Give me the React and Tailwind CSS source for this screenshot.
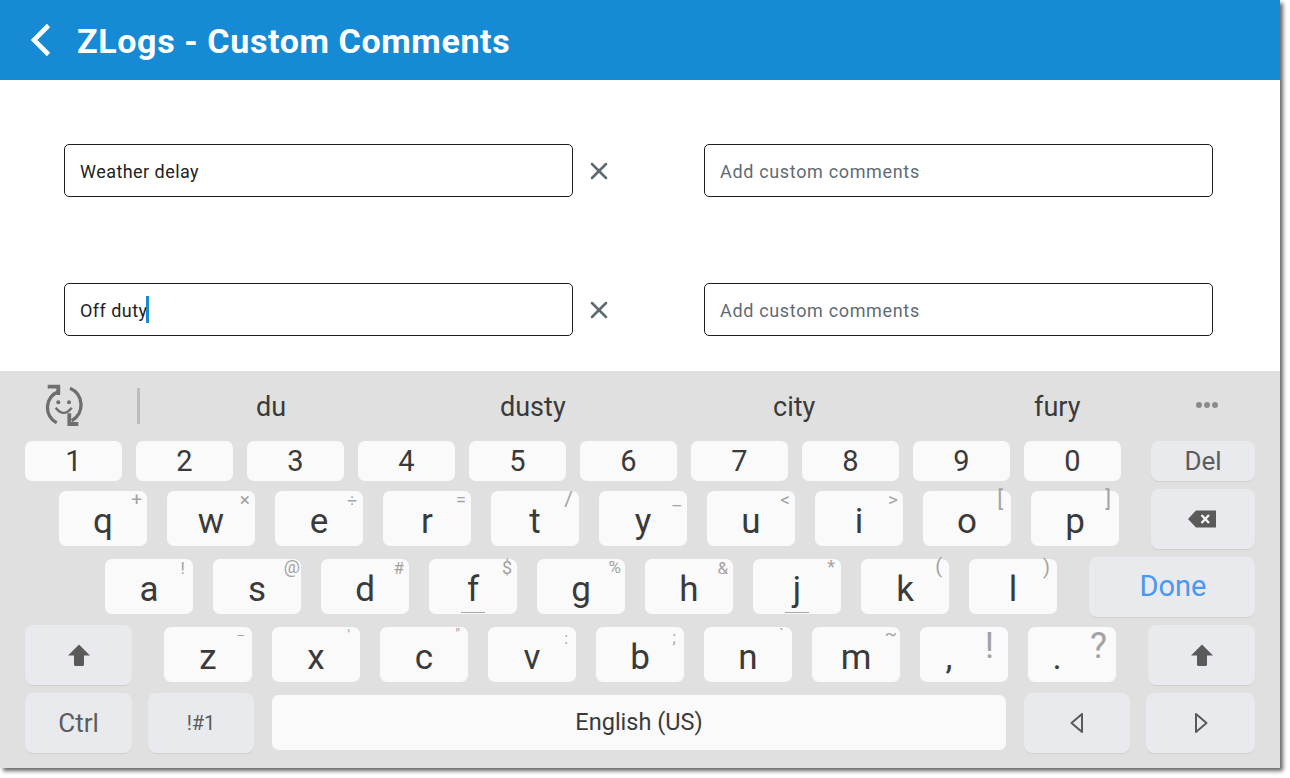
import { X } from 'lucide-react';

const font = "font-['Roboto','Liberation_Sans',sans-serif]";

const numberKeys = ['1', '2', '3', '4', '5', '6', '7', '8', '9', '0'];

const topRow = [
  { k: 'q', hint: '+', hintClass: 'right-[5px] top-[-1px] text-[19px]' },
  { k: 'w', hint: '×', hintClass: 'right-[5px] top-[-1px] text-[19px]' },
  { k: 'e', hint: '÷', hintClass: 'right-[6px] top-[-1px] text-[17px]' },
  { k: 'r', hint: '=', hintClass: 'right-[5px] top-[-1px] text-[18px]' },
  { k: 't', hint: '/', hintClass: 'right-[6px] top-[-2px] text-[21px]' },
  { k: 'y', hint: '_', hintClass: 'right-[6px] top-[-2px] text-[19px]' },
  { k: 'u', hint: '<', hintClass: 'right-[5px] top-[-1px] text-[19px]' },
  { k: 'i', hint: '>', hintClass: 'right-[5px] top-[-1px] text-[19px]' },
  { k: 'o', hint: '[', hintClass: 'right-[8px] top-[-1px] text-[22px]' },
  { k: 'p', hint: ']', hintClass: 'right-[8px] top-[-1px] text-[22px]' },
];

const midRow = [
  { k: 'a', hint: '!', hintClass: 'right-[8px] top-[-1px] text-[17px]' },
  { k: 's', hint: '@', hintClass: 'right-[1px] top-[-2px] text-[18px]' },
  { k: 'd', hint: '#', hintClass: 'right-[5px] top-[-1px] text-[17px]' },
  { k: 'f', hint: '$', hintClass: 'right-[5px] top-[-1px] text-[18px]', bar: true },
  { k: 'g', hint: '%', hintClass: 'right-[4px] top-[-2px] text-[17px]' },
  { k: 'h', hint: '&', hintClass: 'right-[5px] top-[-1px] text-[17px]' },
  { k: 'j', hint: '*', hintClass: 'right-[6px] top-[-2px] text-[18px]', bar: true },
  { k: 'k', hint: '(', hintClass: 'right-[7px] top-[-3px] text-[20px]' },
  { k: 'l', hint: ')', hintClass: 'right-[7px] top-[-2px] text-[20px]' },
];

const lowRow = [
  { k: 'z', hint: '–', hintClass: 'right-[7px] top-[-1px] text-[13px]' },
  { k: 'x', hint: "'", hintClass: 'right-[10px] top-[-2px] text-[15px]' },
  { k: 'c', hint: '"', hintClass: 'right-[8px] top-[-3px] text-[15px]' },
  { k: 'v', hint: ':', hintClass: 'right-[8px] top-[2px] text-[16px]' },
  { k: 'b', hint: ';', hintClass: 'right-[8px] top-[1px] text-[16px]' },
  { k: 'n', hint: '`', hintClass: 'right-[8px] top-[-3px] text-[15px]' },
  { k: 'm', hint: '~', hintClass: 'right-[3px] top-[-3px] text-[18px]' },
  { k: ',', hint: '!', hintClass: 'right-[14px] top-[0px] text-[36px] leading-[38px]', off: true },
  { k: '.', hint: '?', hintClass: 'right-[9px] top-[0px] text-[36px] leading-[38px]', off: true },
];

function LetterKey({ k, hint, hintClass, bar, off }) {
  return (
    <div className={`relative mb-[1px] flex h-[55px] w-[88px] shrink-0 items-center justify-center rounded-[7px] bg-[#fafafa] pt-[6px] text-[35px] leading-none text-[#3a3a3a] ${off ? 'pr-[30px]' : ''}`}>
      {k}
      <span className={`absolute leading-[20px] text-[#a3a3a3] ${hintClass}`}>{hint}</span>
      {bar && <span className="absolute bottom-[1px] left-[32px] h-[1px] w-[24px] bg-[#a8a8a8]" />}
    </div>
  );
}

function FnKey({ className = '', children }) {
  return (
    <div className={`flex shrink-0 items-center justify-center rounded-[8px] bg-[#e9eaed] text-[#5c5c5c] shadow-[0_1px_1px_rgba(0,0,0,0.08)] ${className}`}>
      {children}
    </div>
  );
}

function ShiftIcon() {
  return (
    <svg width="24" height="24" viewBox="0 0 24 24" fill="#5a5a5a">
      <path d="M12 1.5 L23 12.5 L17 12.5 L17 21.5 Q17 23 15.5 23 L8.5 23 Q7 23 7 21.5 L7 12.5 L1 12.5 Z" />
    </svg>
  );
}

function CommentInput({ value, caret }) {
  const hasText = value !== undefined;
  return (
    <div className={`flex h-[53px] w-[509px] shrink-0 items-center rounded-[5px] border border-[#1f1f1f] px-[15px] pt-[2px] text-[18px] ${hasText ? 'tracking-[0.45px] text-[#222222]' : 'tracking-[0.66px] text-[#5f6b72]'}`}>
      {hasText ? value : 'Add custom comments'}
      {caret && <span className="mb-[2px] ml-[-1px] h-[27px] w-[3px] bg-[#168ad4]" />}
    </div>
  );
}

function CommentRow({ value, caret }) {
  return (
    <div className="flex items-center pl-[64px]">
      <CommentInput value={value} caret={caret} />
      <div className="flex w-[131px] shrink-0 pl-[12px]">
        <X size={28} strokeWidth={2.2} className="text-[#5f6b72]" />
      </div>
      <CommentInput />
    </div>
  );
}

export default function App() {
  return (
    <div className={`h-[778px] w-[1290px] overflow-hidden bg-white ${font}`}>
      <div className="flex h-[768px] w-[1280px] flex-col bg-white shadow-[3px_3px_4px_rgba(0,0,0,0.6)]">
        {/* header */}
        <div className="flex h-[80px] shrink-0 items-center bg-[#168ad4] pl-[29px] text-white">
          <svg width="24" height="34" viewBox="0 0 24 34" fill="none" stroke="#ffffff" strokeWidth="4.6">
            <path d="M19.5 2.5 L5 17 L19.5 31.5" />
          </svg>
          <div className="ml-[24px] pt-[2px] text-[34px] font-bold tracking-[0.62px]">ZLogs - Custom Comments</div>
        </div>

        {/* comment fields */}
        <div className="flex h-[291px] shrink-0 flex-col gap-[86px] pt-[64px]">
          <CommentRow value="Weather delay" />
          <CommentRow value="Off duty" caret />
        </div>

        {/* keyboard */}
        <div className="flex flex-1 flex-col bg-[#e0e0e0] text-[#3a3a3a]">
          <div className="flex h-[70px] shrink-0 items-center pb-[1px]">
            <div className="flex w-[137px] shrink-0 pl-[42px]">
              <svg width="44" height="44" viewBox="0 0 44 44" fill="none" stroke="#6e6e6e" strokeWidth="3.4">
                <path d="M16.3 7.7 A17 17 0 0 0 14.7 38.7" />
                <path d="M28 4.3 A18 18 0 0 1 29.7 36.7" />
                <path d="M5.7 2.7 H16.3 V11" strokeWidth="3.8" />
                <path d="M36.3 40 H27.3 V29.3" strokeWidth="3.8" />
                <circle cx="16.3" cy="18.3" r="2" fill="#6e6e6e" stroke="none" />
                <circle cx="27" cy="18.3" r="2" fill="#6e6e6e" stroke="none" />
                <path d="M13.7 23.7 Q21.7 34 29.7 23.7" strokeWidth="2.4" />
              </svg>
            </div>
            <div className="h-[36px] w-[3px] shrink-0 bg-[#bdbdbd]" />
            <div className="relative flex flex-1 pt-[4px] text-[27px]">
              <span className="w-[262px] pl-[116px]">du</span>
              <span className="w-[261px] pl-[98px]">dusty</span>
              <span className="w-[262px] pl-[110px]">city</span>
              <span className="pl-[109px]">fury</span>
              <span className="absolute right-[62px] top-[-1px] flex h-full items-center gap-[2px]">
                <span className="h-[6px] w-[6px] rounded-full bg-[#8a8a8a]" />
                <span className="h-[6px] w-[6px] rounded-full bg-[#8a8a8a]" />
                <span className="h-[6px] w-[6px] rounded-full bg-[#8a8a8a]" />
              </span>
            </div>
          </div>

          <div className="flex flex-col gap-[8px] pl-[25px] pr-[25px]">
            <div className="flex h-[40px] items-center gap-[14px]">
              {numberKeys.map((n) => (
                <div key={n} className="flex h-[40px] w-[97px] shrink-0 items-center justify-center rounded-[7px] bg-[#fafafa] text-[29px] leading-none">
                  {n}
                </div>
              ))}
              <FnKey className="ml-auto h-[40px] w-[104px] text-[26px]">Del</FnKey>
            </div>

            <div className="flex h-[60px] items-center gap-[20px] pl-[34px]">
              {topRow.map((key) => <LetterKey key={key.k} {...key} />)}
              <FnKey className="ml-auto h-[60px] w-[104px] pr-[2px]">
                <svg width="30" height="18" viewBox="0 0 30 18">
                  <path d="M9 0.5 H29 V17.5 H9 L1 9 Z" fill="#5a5a5a" />
                  <path d="M14.5 5 L22 13 M22 5 L14.5 13" stroke="#f2f2f2" strokeWidth="2.4" />
                </svg>
              </FnKey>
            </div>

            <div className="flex h-[60px] items-center gap-[20px] pl-[80px]">
              {midRow.map((key) => <LetterKey key={key.k} {...key} />)}
              <FnKey className="ml-auto h-[60px] w-[166px] pl-[2px] text-[29px] !text-[#4a98f0]">Done</FnKey>
            </div>

            <div className="flex h-[60px] items-center">
              <FnKey className="h-[60px] w-[107px]"><ShiftIcon /></FnKey>
              <div className="ml-[32px] flex gap-[20px]">
                {lowRow.map((key) => <LetterKey key={key.k} {...key} />)}
              </div>
              <FnKey className="ml-auto h-[60px] w-[107px]"><ShiftIcon /></FnKey>
            </div>

            <div className="flex h-[60px] items-center">
              <FnKey className="h-[60px] w-[107px] text-[26px]">Ctrl</FnKey>
              <FnKey className="ml-[16px] h-[60px] w-[106px] text-[20px]">!#1</FnKey>
              <div className="mb-[1px] ml-[18px] flex h-[55px] w-[734px] shrink-0 items-center justify-center rounded-[7px] bg-[#fafafa] text-[23.5px] text-[#3a3a3a]">
                English (US)
              </div>
              <FnKey className="ml-[18px] h-[60px] w-[106px]">
                <svg width="16" height="22" viewBox="0 0 16 22" fill="none" stroke="#5a5a5a" strokeWidth="2" strokeLinejoin="round">
                  <path d="M13 2 V20 L2.5 11 Z" />
                </svg>
              </FnKey>
              <FnKey className="ml-auto h-[60px] w-[109px]">
                <svg width="16" height="22" viewBox="0 0 16 22" fill="none" stroke="#5a5a5a" strokeWidth="2" strokeLinejoin="round">
                  <path d="M3 2 V20 L13.5 11 Z" />
                </svg>
              </FnKey>
            </div>
          </div>
        </div>
      </div>
    </div>
  );
}
